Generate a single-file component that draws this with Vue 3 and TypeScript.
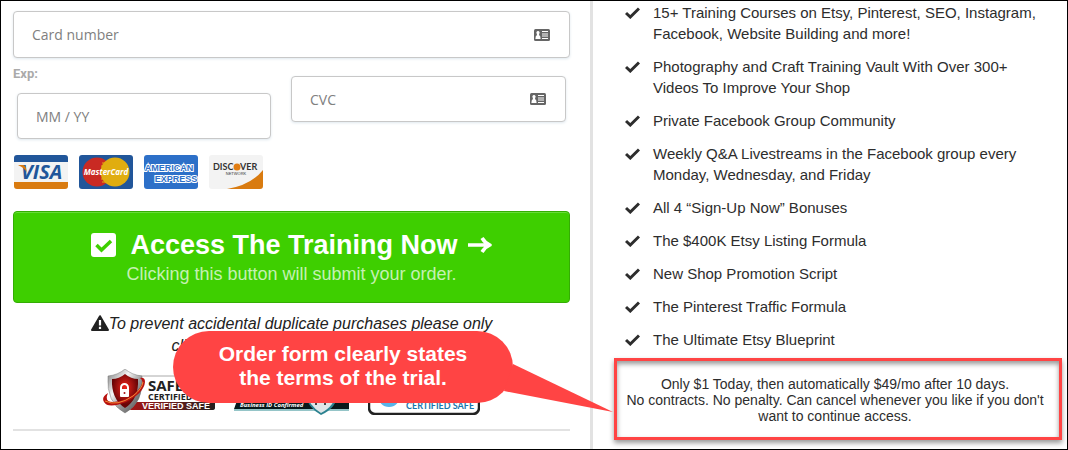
<script setup lang="ts">
const benefits: string[] = [
  '15+ Training Courses on Etsy, Pinterest, SEO, Instagram, Facebook, Website Building and more!',
  'Photography and Craft Training Vault With Over 300+ Videos To Improve Your Shop',
  'Private Facebook Group Community',
  'Weekly Q&A Livestreams in the Facebook group every Monday, Wednesday, and Friday',
  'All 4 “Sign-Up Now” Bonuses',
  'The $400K Etsy Listing Formula',
  'New Shop Promotion Script',
  'The Pinterest Traffic Formula',
  'The Ultimate Etsy Blueprint',
]
</script>

<template>
  <div class="page">
    <main class="order">
      <form class="form" @submit.prevent>
        <div class="field">
          <input type="text" placeholder="Card number" aria-label="Card number" />
          <svg class="id-icon" viewBox="0 0 16 12" aria-hidden="true">
            <rect width="16" height="12" rx="1.5" fill="#666" />
            <path d="M4 2a1.6 1.6 0 0 1 1.3 2.6L5 6q1.6.6 1.6 4H1.4Q1.4 6.600 3 6l-.3-1.400A1.600 1.600 0 0 1 4 2Z" fill="#fff" />
            <path d="M8 2.500h6M8 5h6M8 7h6M8 9.500h6" stroke="#fff" stroke-width="1" />
          </svg>
        </div>

        <div class="row">
          <div class="exp">
            <label for="exp">Exp:</label>
            <div class="field"><input id="exp" type="text" placeholder="MM / YY" /></div>
          </div>
          <div class="cvc field">
            <input type="text" placeholder="CVC" aria-label="CVC" />
            <svg class="id-icon" viewBox="0 0 16 12" aria-hidden="true">
              <rect width="16" height="12" rx="1.5" fill="#666" />
              <path d="M4 2a1.6 1.6 0 0 1 1.3 2.6L5 6q1.6.6 1.6 4H1.4Q1.4 6.600 3 6l-.3-1.400A1.600 1.600 0 0 1 4 2Z" fill="#fff" />
              <path d="M8 2.500h6M8 5h6M8 7h6M8 9.500h6" stroke="#fff" stroke-width="1" />
            </svg>
          </div>
        </div>

        <div class="cards">
          <svg viewBox="0 0 54 34" role="img" aria-label="Visa">
            <rect width="54" height="34" rx="3" fill="#f3f3f3" />
            <path d="M0 7V3a3 3 0 0 1 3-3h48a3 3 0 0 1 3 3v4Z" fill="#21569a" />
            <path d="M0 27h54v4a3 3 0 0 1-3 3H3a3 3 0 0 1-3-3Z" fill="#d97b10" />
            <text x="7" y="24" class="visa">VISA</text>
            <path d="M4 10h5q2 0 3 3l1 5Q11 13 4 10Z" fill="#d97b10" />
          </svg>
          <svg viewBox="0 0 54 34" role="img" aria-label="MasterCard">
            <rect width="54" height="34" rx="3" fill="#21569a" />
            <circle cx="18" cy="17" r="14.500" fill="#c92a23" />
            <circle cx="36" cy="17" r="14.500" fill="#e0ad10" />
            <path d="M27 8h-4M27 11h-5M27 24h-5M27 27h-4" stroke="#e0ad10" stroke-width="1" />
            <text x="27" y="20" class="master">MasterCard</text>
          </svg>
          <svg viewBox="0 0 54 34" role="img" aria-label="American Express">
            <rect width="54" height="34" rx="3" fill="#2d70c8" />
            <text x="25" y="16" class="amex">AMERICAN</text>
            <text x="32" y="27" class="amex">EXPRESS</text>
          </svg>
          <svg viewBox="0 0 54 34" role="img" aria-label="Discover Network">
            <rect width="54" height="34" rx="3" fill="#f3f3f3" />
            <path d="M18 34Q42 30 54 15v16a3 3 0 0 1-3 3Z" fill="#d97b10" />
            <text x="4" y="15" class="disc">DISC</text>
            <circle cx="28" cy="12" r="3.500" fill="#e07d14" />
            <text x="31" y="15" class="disc">VER</text>
            <text x="27" y="20" class="net">NETWORK</text>
          </svg>
        </div>

        <button class="submit" type="submit">
          <span class="title">
            <svg class="box" viewBox="0 0 25 24" aria-hidden="true">
              <rect width="25" height="24" rx="3" fill="#fff" />
              <path d="m5.500 12 5 5L20 8" fill="none" stroke="#3ecf00" stroke-width="3.500" />
            </svg>
            Access The Training Now
            <svg class="arrow" viewBox="0 0 25 18" aria-hidden="true">
              <path d="M1 9h21M15 2q3 5 8 7-5 2-8 7" fill="none" stroke="#fff" stroke-width="3.500" stroke-linejoin="round" />
            </svg>
          </span>
          <span class="sub">Clicking this button will submit your order.</span>
        </button>
      </form>

      <p class="note">
        <svg viewBox="0 0 18 16" aria-hidden="true">
          <path d="M9 1.200 17 15H1Z" fill="#222" stroke="#222" stroke-width="2" stroke-linejoin="round" />
          <path d="M9 5v5.500M9 11.800v2.200" stroke="#fff" stroke-width="2.200" />
        </svg>To prevent accidental duplicate purchases please only<br />click the order button above once.
      </p>

      <div class="badges">
        <svg viewBox="0 0 112 46" role="img" aria-label="Safe and secure, certified, verified safe">
          <defs>
            <linearGradient id="silver" x1="0" x2="1" y2="1">
              <stop offset="0" stop-color="#777" /><stop offset=".35" stop-color="#f5f5f5" />
              <stop offset=".6" stop-color="#999" /><stop offset="1" stop-color="#444" />
            </linearGradient>
            <radialGradient id="ruby" cy=".4">
              <stop offset="0" stop-color="#f0251c" /><stop offset="1" stop-color="#680405" />
            </radialGradient>
            <linearGradient id="ribbon">
              <stop offset="0" stop-color="#a51515" /><stop offset="1" stop-color="#252020" />
            </linearGradient>
          </defs>
          <path d="M30 7h80v25" fill="none" stroke="#aaa" />
          <path d="M30 33h82v6q0 2-3 2H27Z" fill="url(#ribbon)" />
          <text x="45" y="22" class="safe">SAFE</text>
          <text x="45" y="31" class="cert">CERTIFIED</text>
          <text x="39" y="40" class="ver">VERIFIED SAFE</text>
          <path d="M22 0q7 6 17 7 2 27-17 37Q3 34 5 7q10-1 17-7Z" fill="url(#silver)" stroke="#777" stroke-width=".5" />
          <path d="M22 5q6 5 13 5 1 20-13 29Q8 30 9 10q7 0 13-5Z" fill="url(#ruby)" />
          <path d="M5 24Q-2 28 1 33q4 7 22 0 18-9 19-20 0-5-5-4 5 3-1 11-10 12-26 13-9 0-5-9Z" fill="#b8120f" />
          <path d="M2 32q12 6 28-5 9-7 10-14" fill="none" stroke="#f28a35" />
          <path d="M18 22v-3.500a3.500 3.500 0 0 1 7 0V22" fill="none" stroke="#fff" stroke-width="2" />
          <rect x="17" y="20" width="9" height="8" rx="1" fill="#fff" /><circle cx="21.500" cy="24" r="1" fill="#a81010" />
        </svg>
        <svg viewBox="0 0 115 46" role="img" aria-label="Business ID Confirmed">
          <path d="M4 29h111v11H0Z" fill="#07191c" />
          <path d="M0 41h115" stroke="#2c8b92" stroke-width="1" />
          <text x="6" y="38" class="biz">Business ID Confirmed</text>
          <path d="M69 22h36q-2 17-18 24-13-7-18-24Z" fill="#2b8290" />
          <path d="M71 22h32q-2 15-16 22-12-7-16-22Z" fill="#dfe5e7" />
          <path d="M82 33v3M91 33v3" stroke="#444" stroke-width="2" />
        </svg>
        <svg viewBox="0 0 112 46" role="img" aria-label="Certified safe">
          <rect x="1" y="3" width="110" height="42" rx="6" fill="#fff" stroke="#222" stroke-width="2.500" />
          <circle cx="21" cy="27" r="11" fill="#58b4e8" />
          <text x="38" y="40" class="blue">CERTIFIED SAFE</text>
        </svg>
      </div>
      <hr />

      <aside class="callout">
        <svg class="tail" viewBox="0 0 109 48" aria-hidden="true"><path d="M9 0 109 48 0 27Z" fill="#ff4444" /></svg>
        Order form clearly states<br />the terms of the trial.
      </aside>
    </main>

    <section class="offer">
      <ul>
        <li v-for="item in benefits" :key="item">
          <svg viewBox="0 0 15 12" aria-hidden="true"><path d="M1 6l4.300 4L14 1.500" fill="none" stroke="#2d2d2d" stroke-width="3" /></svg>
          <span>{{ item }}</span>
        </li>
      </ul>
      <p class="terms">
        Only $1 Today, then automatically $49/mo after 10 days.<br />
        No contracts. No penalty. Can cancel whenever you like if you don't want to continue access.
      </p>
    </section>
  </div>
</template>

<style>
body { margin: 0; }
</style>

<style scoped>
.page {
  box-sizing: border-box;
  height: 100vh;
  overflow: hidden;
  border: 1px solid #000;
  display: grid;
  grid-template-columns: 589fr 477fr;
  background: #fff;
  color: #2d2d2d;
  font-family: "Liberation Sans", Arial, sans-serif;
}
svg { display: block; flex: none; }
.order { position: relative; padding: 10px 20px 0 12px; }
.field { position: relative; }
.field input {
  box-sizing: border-box;
  display: block;
  width: 100%;
  height: 46px;
  padding: 0 18px;
  border: 1px solid #c8c8c8;
  border-radius: 4px;
  background: #fff;
  box-shadow: 0 1px 3px #dfe8ee;
  font: 14px/20px "Open Sans", "Noto Sans", sans-serif;
}
.form > .field input { height: 47px; }
.field input::placeholder { color: #808080; opacity: 1; }
.id-icon { position: absolute; right: 20px; top: 50%; width: 16px; height: 12px; margin-top: -6px; }
.row { display: grid; grid-template-columns: 262fr 283fr; gap: 12px; align-items: start; }
.exp { padding-top: 8px; }
.exp label { display: block; font: bold 13px/16px Roboto, sans-serif; color: #aaa; }
.exp .field { margin: 11px 4px 0; }
.cvc { margin: 18px 4px 0; }
.cards { display: flex; gap: 11px; margin: 16px 0 22px 1px; }
.cards svg { width: 54px; height: 34px; }
.visa { font: italic bold 20px "Open Sans", sans-serif; fill: #21569a; }
.master { font: italic bold 8px "Open Sans", sans-serif; fill: #fff; text-anchor: middle; }
.amex { font: bold 9px "Liberation Sans", sans-serif; fill: #2d70c8; stroke: #fff; stroke-width: 2px; paint-order: stroke; text-anchor: middle; }
.disc { font: bold 9px Lato, sans-serif; fill: #333; }
.net { font: 4px "Liberation Sans", sans-serif; fill: #333; text-anchor: middle; }
.submit {
  box-sizing: border-box;
  display: flex;
  flex-direction: column;
  align-items: center;
  width: 100%;
  padding: 16px 0 15px;
  border: 1px solid #34ad03;
  border-radius: 4px;
  background: #3ecf00;
  box-shadow: inset 0 1px 0 #67dc39;
  color: #fff;
  font-family: inherit;
}
.title { display: flex; align-items: center; font-size: 27px; line-height: 34px; font-weight: bold; white-space: nowrap; }
.box { width: 25px; height: 24px; margin-right: 14px; }
.arrow { width: 25px; height: 18px; margin-left: 9px; }
.sub { font-size: 18px; line-height: 25px; color: #c5f1b3; }
.note { margin: 10px 0 0; font-size: 16px; line-height: 22px; font-style: italic; text-align: center; color: #222; }
.note svg { display: inline-block; width: 18px; height: 16px; vertical-align: -2px; }
.badges { display: flex; justify-content: center; gap: 19px; margin-top: 12px; }
.badges svg { height: 46px; }
.safe { font: bold 15px "Open Sans", sans-serif; fill: #222; }
.cert { font: bold 9px "Open Sans", sans-serif; fill: #222; }
.ver { font: bold 9px "Liberation Sans", sans-serif; fill: #fff; }
.biz { font: italic bold 6px "Open Sans", sans-serif; fill: #fff; }
.blue { font: bold 9px Lato, sans-serif; fill: #1876ad; }
hr { height: 2px; margin: 14px 0 0; border: 0; background: #e2e2e2; }
.callout {
  position: absolute;
  left: 172px;
  top: 330px;
  box-sizing: border-box;
  width: 340px;
  height: 72px;
  padding-top: 11px;
  border-radius: 36px;
  background: #ff4444;
  color: #fff;
  font-size: 21px;
  line-height: 24px;
  font-weight: bold;
  text-align: center;
}
.tail { position: absolute; left: 331px; top: 33px; width: 109px; height: 48px; }
.offer { border-left: 3px solid #e2e2e2; padding: 1px 5px 0 21px; }
ul { list-style: none; margin: 0 8px 8px 11px; padding: 0; display: grid; gap: 12px; font-size: 15px; line-height: 21px; }
li { display: flex; gap: 13px; }
li svg { width: 15px; height: 12px; margin-top: 5px; }
.terms {
  margin: 0;
  padding: 15px 14px 13px 8px;
  border: 3px solid #ff4444;
  box-shadow: 0 3px 5px #999, inset 0 3px 5px #999;
  font-size: 14px;
  line-height: 16px;
  text-align: center;
}
</style>
